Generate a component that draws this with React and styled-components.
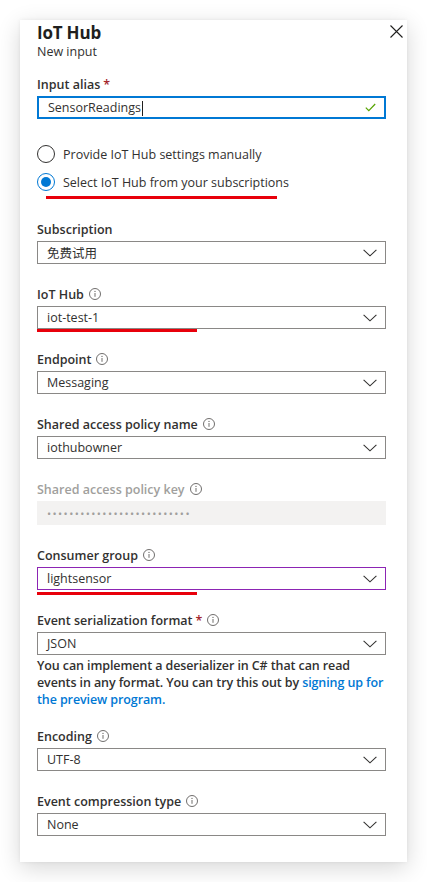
import * as React from 'react';
import styled, { createGlobalStyle } from 'styled-components';

const GlobalStyle = createGlobalStyle`
    html, body {
        margin: 0;
        padding: 0;
        background: #ffffff;
    }
    body {
        font-family: "Open Sans", "Noto Sans", "Noto Sans CJK SC", sans-serif;
        color: #323130;
        -webkit-font-smoothing: antialiased;
    }
`;

const Page = styled.div`
    padding: 20px 20px 20px 20px;
    width: 427px;
    box-sizing: border-box;
`;

const Panel = styled.div`
    position: relative;
    display: flex;
    flex-direction: column;
    width: 387px;
    height: 842px;
    box-sizing: border-box;
    padding: 2px 21px 0 17px;
    background: #ffffff;
    box-shadow: 0 6px 22px rgba(0, 0, 0, 0.16), 0 0 4px rgba(0, 0, 0, 0.06);
`;

const Title = styled.h1`
    margin: 0;
    font-size: 17px;
    line-height: 22px;
    font-weight: 700;
    letter-spacing: -0.2px;
    color: #201f1e;
`;

const Subtitle = styled.div`
    font-size: 12.5px;
    line-height: 16px;
    color: #323130;
`;

const CloseButton = styled.button`
    position: absolute;
    top: 5px;
    right: 4px;
    width: 13px;
    height: 13px;
    padding: 0;
    border: 0;
    background: none;
    display: flex;
`;

const Field = styled.div`
    position: relative;
    display: flex;
    flex-direction: column;
    margin-top: ${p => p.$top || 21}px;
`;

const Label = styled.label`
    display: flex;
    align-items: center;
    gap: 5px;
    height: 18px;
    margin-bottom: 3px;
    font-size: 12.5px;
    font-weight: 600;
    color: ${p => (p.$disabled ? '#a19f9d' : '#323130')};
`;

const Required = styled.span`
    color: #a4262c;
    margin-left: 3px;
`;

const Box = styled.div`
    display: flex;
    align-items: center;
    justify-content: space-between;
    height: 23px;
    box-sizing: border-box;
    padding: 0 8px 0 9px;
    border: ${p => (p.$focused ? '2px' : '1px')} solid ${p => p.$border || '#8a8886'};
    background: #ffffff;
    font-size: 12.5px;
    color: #323130;
`;

const MaskedBox = styled.div`
    display: flex;
    align-items: center;
    height: 24px;
    padding: 0 10px;
    background: #f3f2f1;
    color: #a19f9d;
    font-size: 11px;
    letter-spacing: 1.4px;
`;

const Cursor = styled.span`
    display: inline-block;
    width: 1px;
    height: 15px;
    background: #201f1e;
    vertical-align: middle;
    margin-left: 1px;
`;

const RadioGroup = styled.div`
    display: flex;
    flex-direction: column;
    gap: 8px;
    margin-top: 25px;
`;

const RadioRow = styled.div`
    position: relative;
    display: flex;
    align-items: center;
    gap: 8px;
    height: 20px;
    font-size: 12.5px;
`;

const RadioCircle = styled.span`
    display: flex;
    align-items: center;
    justify-content: center;
    width: 18px;
    height: 18px;
    box-sizing: border-box;
    border-radius: 50%;
    border: 1px solid ${p => (p.$checked ? '#0078d4' : '#323130')};

    &::after {
        content: '';
        display: ${p => (p.$checked ? 'block' : 'none')};
        width: 10px;
        height: 10px;
        border-radius: 50%;
        background: #0078d4;
    }
`;

const Annotation = styled.span`
    position: absolute;
    left: ${p => p.$left}px;
    top: ${p => p.$top}px;
    width: ${p => p.$width}px;
    height: 3px;
    background: #e8000b;
`;

const HelpText = styled.p`
    margin: 2px 0 0;
    font-size: 12.5px;
    line-height: 17px;
    font-weight: 600;
    letter-spacing: -0.1px;
    color: #323130;
`;

const HelpLink = styled.a`
    color: #0078d4;
    text-decoration: none;
`;

const InfoIcon = () => (
    <svg width="12" height="12" viewBox="0 0 12 12">
        <circle cx="6" cy="6" r="5.5" fill="none" stroke="#605e5c" strokeWidth="0.9" />
        <rect x="5.55" y="5" width="0.9" height="3.8" fill="#605e5c" />
        <circle cx="6" cy="3.4" r="0.6" fill="#605e5c" />
    </svg>
);

const Chevron = () => (
    <svg width="14" height="8" viewBox="0 0 14 8">
        <path d="M0.6 0.8 L7 6.8 L13.4 0.8" fill="none" stroke="#323130" strokeWidth="1.1" />
    </svg>
);

const Check = () => (
    <svg width="11" height="9" viewBox="0 0 11 9">
        <path d="M0.8 4.6 L3.8 7.6 L10.2 1" fill="none" stroke="#57a300" strokeWidth="1.2" />
    </svg>
);

const Select = ({ value, border }) => (
    <Box $border={border}>
        <span>{value}</span>
        <Chevron />
    </Box>
);

const SelectField = ({ label, value, info = true, required, border, top, children }) => (
    <Field $top={top}>
        <Label>
            <span>{label}{required && <Required>*</Required>}</span>
            {info && <InfoIcon />}
        </Label>
        <Select value={value} border={border} />
        {children}
    </Field>
);

const App = () => {
    return (
        <Page>
            <GlobalStyle />
            <Panel>
                <Title>IoT Hub</Title>
                <Subtitle>New input</Subtitle>
                <CloseButton aria-label="Close">
                    <svg width="13" height="13" viewBox="0 0 13 13">
                        <path d="M0.5 0.5 L12.5 12.5 M12.5 0.5 L0.5 12.5" stroke="#201f1e" strokeWidth="1.1" />
                    </svg>
                </CloseButton>

                <Field $top={15}>
                    <Label>
                        <span>Input alias<Required>*</Required></span>
                    </Label>
                    <Box $focused $border="#0078d4">
                        <span>SensorReadings<Cursor /></span>
                        <Check />
                    </Box>
                </Field>

                <RadioGroup>
                    <RadioRow>
                        <RadioCircle />
                        <span>Provide IoT Hub settings manually</span>
                    </RadioRow>
                    <RadioRow>
                        <RadioCircle $checked />
                        <span>Select IoT Hub from your subscriptions</span>
                        <Annotation $left={9} $top={24} $width={231} />
                    </RadioRow>
                </RadioGroup>

                <SelectField label="Subscription" value="免费试用" info={false} top={28} />
                <SelectField label="IoT Hub" value="iot-test-1">
                    <Annotation $left={0} $top={44} $width={160} />
                </SelectField>
                <SelectField label="Endpoint" value="Messaging" />
                <SelectField label="Shared access policy name" value="iothubowner" />

                <Field $top={21}>
                    <Label $disabled>
                        <span>Shared access policy key</span>
                        <InfoIcon />
                    </Label>
                    <MaskedBox>{'•'.repeat(26)}</MaskedBox>
                </Field>

                <SelectField label="Consumer group" value="lightsensor" border="#8c24b4">
                    <Annotation $left={0} $top={46} $width={160} />
                </SelectField>

                <SelectField label="Event serialization format" value="JSON" required />
                <HelpText>
                    You can implement a deserializer in C# that can read events in any format. You can try this out by{' '}
                    <HelpLink href="#">signing up for the preview program.</HelpLink>
                </HelpText>

                <SelectField label="Encoding" value="UTF-8" top={19} />
                <SelectField label="Event compression type" value="None" />
            </Panel>
        </Page>
    );
};

export default App;
